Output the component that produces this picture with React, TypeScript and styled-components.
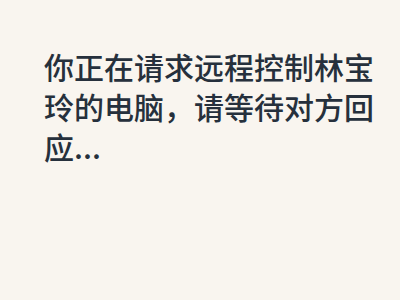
import React from 'react';
import styled, { createGlobalStyle } from 'styled-components';

const GlobalStyle = createGlobalStyle`
  html, body {
    margin: 0;
    padding: 0;
    background: #f9f5ef;
  }
`;

const Screen = styled.div`
  width: 400px;
  height: 300px;
  box-sizing: border-box;
  padding: 46px 20px 0 44px;
  background: #f9f5ef;
`;

const Message = styled.p`
  margin: 0;
  font-family: "Noto Sans CJK SC", "Noto Sans", sans-serif;
  font-size: 30px;
  font-weight: 500;
  line-height: 40px;
  color: #26303c;
  word-break: break-all;
`;

const App: React.FC = () => {
  return (
    <>
      <GlobalStyle />
      <Screen>
        <Message>你正在请求远程控制林宝玲的电脑，请等待对方回应...</Message>
      </Screen>
    </>
  );
};

export default App;
